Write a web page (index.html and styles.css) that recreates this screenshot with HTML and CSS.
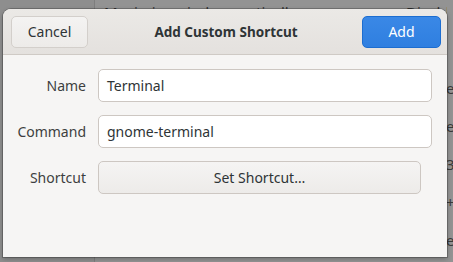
FILE: index.html
```html
<!DOCTYPE html>
<html>
<head>
<meta charset="utf-8">
<link rel="stylesheet" href="styles.css">
</head>
<body>
<div class="backdrop">
  <div class="sidebar"></div>
  <div class="main">
    <div class="bg-row first">
      <span class="bg-name">Maximize window vertically</span>
      <span class="bg-val">Disabled</span>
    </div>
  </div>
  <div class="edge">
    <span>e</span><span>e</span><span>3</span><span>+</span><span>e</span>
  </div>
</div>

<div class="dialog">
  <header class="headerbar">
    <button class="btn cancel">Cancel</button>
    <div class="title">Add Custom Shortcut</div>
    <button class="btn add">Add</button>
  </header>
  <div class="content">
    <label class="lbl">Name</label>
    <div class="entry">Terminal</div>
    <label class="lbl">Command</label>
    <div class="entry">gnome-terminal</div>
    <label class="lbl">Shortcut</label>
    <button class="btn setshort">Set Shortcut…</button>
  </div>
</div>
</body>
</html>
```

FILE: styles.css
```css
* { box-sizing: border-box; }
html, body {
  margin: 0;
  padding: 0;
  width: 453px;
  height: 262px;
  overflow: hidden;
  font-family: "Noto Sans", "Open Sans", sans-serif;
}
body { position: relative; background: #8f8f8f; }

.backdrop {
  display: flex;
  width: 453px;
  height: 262px;
  background: #939393;
}
.sidebar {
  width: 95px;
  flex: none;
  background: #8e8e8e;
  border-right: 1px solid #7e7e7e;
}
.main {
  flex: 1;
  padding-left: 9px;
  color: #353535;
  font-size: 15px;
  overflow: hidden;
}
.bg-row {
  display: flex;
  height: 38px;
  white-space: nowrap;
}
.bg-row.first { margin-top: 2px; }
.bg-name { width: 302px; flex: none; }
.bg-val { flex: none; }
.edge {
  width: 6px;
  flex: none;
  display: flex;
  flex-direction: column;
  padding-top: 78px;
  gap: 18px;
  color: #3a3a3a;
  font-size: 15px;
  line-height: 20px;
  overflow: hidden;
  white-space: nowrap;
}
.edge span { margin-left: -1px; }

.dialog {
  position: absolute;
  left: 3px;
  top: 9px;
  width: 444px;
  height: 248px;
  background: #f6f5f4;
  border-radius: 8px 8px 0 0;
  box-shadow: 0 0 0 1px rgba(0,0,0,0.22), 0 2px 5px rgba(0,0,0,0.25);
  overflow: hidden;
  display: flex;
  flex-direction: column;
}
.headerbar {
  height: 46px;
  flex: none;
  display: flex;
  align-items: center;
  justify-content: space-between;
  padding: 0 6px 0 8px;
  background: linear-gradient(#ebe9e6, #e4e1de);
  border-bottom: 1px solid #cfcac5;
}
.title {
  font-weight: bold;
  font-size: 13.5px;
  color: #2e3436;
  padding-left: 2px;
}
.btn {
  font-family: inherit;
  font-size: 14px;
  border-radius: 5px;
  cursor: default;
}
.cancel {
  width: 77px;
  height: 32px;
  background: linear-gradient(#f4f3f2, #edebe9);
  border: 1px solid #d3cfcb;
  color: #2e3436;
}
.add {
  width: 79px;
  height: 32px;
  background: linear-gradient(#3a88e6, #2f7fe0);
  border: 1px solid #1c6dd0;
  color: #ffffff;
}
.content {
  display: grid;
  grid-template-columns: 83px 334px;
  column-gap: 12px;
  row-gap: 13px;
  padding-top: 14px;
  align-items: center;
}
.lbl {
  text-align: right;
  font-size: 14px;
  color: #3d3f40;
}
.entry {
  height: 33px;
  background: #ffffff;
  border: 1px solid #cdc7c2;
  border-radius: 5px;
  padding: 0 8px;
  display: flex;
  align-items: center;
  font-size: 14px;
  color: #2e3436;
}
.setshort {
  width: 323px;
  height: 33px;
  background: linear-gradient(#f5f4f3, #edebe9);
  border: 1px solid #cdc7c2;
  color: #2e3436;
}
```
